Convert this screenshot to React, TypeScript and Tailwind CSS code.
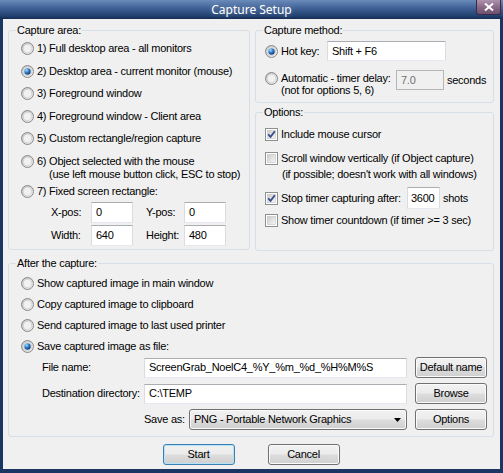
import React from 'react'

// 공통 폰트
const FONT = "font-['Liberation_Sans',Arial,sans-serif]"

const Radio = ({ on = false }: { on?: boolean }) => (
  <svg width="13" height="13" viewBox="0 0 13 13" className="shrink-0">
    <defs>
      <linearGradient id="rOut" x1="0" y1="0" x2="1" y2="1">
        <stop offset="0" stopColor="#bdbdbd" />
        <stop offset="1" stopColor="#f4f4f4" />
      </linearGradient>
      <radialGradient id="rDot" cx="0.35" cy="0.3" r="0.75">
        <stop offset="0" stopColor="#a9defc" />
        <stop offset="0.45" stopColor="#3485cf" />
        <stop offset="1" stopColor="#0b376e" />
      </radialGradient>
    </defs>
    <circle cx="6.5" cy="6.5" r="6" fill="url(#rOut)" stroke="#8a8a8a" />
    <circle cx="6.5" cy="6.5" r="4.2" fill="#f1f1f1" stroke="#d2d2d2" strokeWidth="0.8" />
    {on && <circle cx="6.5" cy="6.5" r="3.2" fill="url(#rDot)" />}
  </svg>
)

const Check = ({ on = false }: { on?: boolean }) => (
  <svg width="13" height="13" viewBox="0 0 13 13" className="shrink-0">
    <defs>
      <linearGradient id="cIn" x1="0" y1="0" x2="1" y2="1">
        <stop offset="0" stopColor="#cbcbcb" />
        <stop offset="1" stopColor="#f7f7f7" />
      </linearGradient>
    </defs>
    <rect x="0.5" y="0.5" width="12" height="12" fill="#ffffff" stroke="#8e8f8f" />
    <rect x="2.5" y="2.5" width="8" height="8" fill="url(#cIn)" stroke="#c4c4c4" strokeWidth="0.6" />
    {on && <path d="M3.3 6.4 L5.5 8.9 L9.9 3.3" fill="none" stroke="#34498c" strokeWidth="1.7" />}
  </svg>
)

// 텍스트 입력칸 모양
const Box = ({ children, className = '', dis = false }: { children?: React.ReactNode; className?: string; dis?: boolean }) => (
  <div
    className={`flex items-center pl-[4px] border ${
      dis
        ? 'bg-[#f0f0f0] border-[#b3b7ba] text-[#707070]'
        : 'bg-white border-[#abadb3] border-x-[#d9dce3] border-b-[#e3e9ef]'
    } ${className}`}
  >
    {children}
  </div>
)

const Btn = ({ children, def = false, className = '' }: { children: React.ReactNode; def?: boolean; className?: string }) => (
  <div
    className={`flex items-center justify-center w-[72px] h-[21px] rounded-[3px] border bg-[linear-gradient(#f2f2f2_0%,#ebebeb_48%,#dddddd_52%,#cfcfcf_100%)] ${
      def ? 'border-[#3c7fb1] shadow-[inset_0_0_0_1px_#b6e2f8]' : 'border-[#707070] shadow-[inset_0_0_0_1px_#fbfbfb]'
    } ${className}`}
  >
    {children}
  </div>
)

const Group = ({ title, className = '', children }: { title: string; className?: string; children: React.ReactNode }) => (
  <fieldset className={`border border-[#d5dfe5] rounded-[3px] min-w-0 ${className}`}>
    <legend className="ml-[7px] px-[1px] leading-[13px]">{title}</legend>
    {children}
  </fieldset>
)

export default function App() {
  return (
    <div className={`w-[503px] h-[473px] bg-[#1b3663] flex flex-col ${FONT} text-[11px] leading-[13px] tracking-[-0.25px] text-black whitespace-nowrap`}>
      {/* 타이틀 바 */}
      <div className="h-[19px] shrink-0 flex bg-[linear-gradient(#6b8bbb,#3d5f94_45%,#21406f_85%,#132a52)]">
        <div className="w-[27px]" />
        <div className="flex-1 text-center text-white text-[12px] leading-[19px] tracking-normal font-['Noto_Sans',sans-serif] [text-shadow:0_0_5px_rgba(255,255,255,0.35)]">
          Capture Setup
        </div>
        <div className="w-[25px] h-[15px] mr-[2px] flex items-center justify-center rounded-b-[3px] border border-t-0 border-[#3b2a45] bg-[linear-gradient(#ae93ad,#8a6a88_50%,#6f4f70)]">
          <svg width="10" height="8" viewBox="0 0 10 8">
            <path d="M1 0.5 L9 7.5 M9 0.5 L1 7.5" stroke="#ffffff" strokeWidth="2" />
          </svg>
        </div>
      </div>

      {/* 본문 */}
      <div className="mx-[3px] h-[450px] bg-[#f0f0f0] pt-[5px] pl-[5px] pr-[6px] flex flex-col">
        <div className="flex gap-[5px] h-[227px]">
          <Group title="Capture area:" className="w-[242px] h-[226px]">
            <div className="pl-[12px]">
              <div className="flex items-center h-[23px] gap-[3px]"><Radio /><span>1) Full desktop area - all monitors</span></div>
              <div className="flex items-center h-[22px] gap-[3px]"><Radio on /><span>2) Desktop area - current monitor (mouse)</span></div>
              <div className="flex items-center h-[23px] gap-[3px]"><Radio /><span>3) Foreground window</span></div>
              <div className="flex items-center h-[22px] gap-[3px]"><Radio /><span>4) Foreground window - Client area</span></div>
              <div className="flex items-center h-[23px] gap-[3px]"><Radio /><span>5) Custom rectangle/region capture</span></div>
              <div className="pt-[5px]">
                <div className="flex items-center h-[13px] gap-[3px]"><Radio /><span>6) Object selected with the mouse</span></div>
                <div className="ml-[28px] h-[12px] leading-[12px]">(use left mouse button click, ESC to stop)</div>
              </div>
              <div className="flex items-center h-[22px] gap-[3px]"><Radio /><span>7) Fixed screen rectangle:</span></div>
              <div className="flex items-center h-[21px] ml-[30px]">
                <span className="w-[40px]">X-pos:</span>
                <Box className="w-[42px] h-[21px]">0</Box>
                <span className="w-[38px] ml-[13px]">Y-pos:</span>
                <Box className="w-[42px] h-[21px]">0</Box>
              </div>
              <div className="flex items-center h-[21px] ml-[30px] mt-[2px]">
                <span className="w-[40px]">Width:</span>
                <Box className="w-[42px] h-[21px]">640</Box>
                <span className="w-[38px] ml-[13px]">Height:</span>
                <Box className="w-[42px] h-[21px]">480</Box>
              </div>
            </div>
          </Group>

          <div className="flex flex-col w-[239px]">
            <Group title="Capture method:" className="h-[79px]">
              <div className="pl-[9px] pt-[4px]">
                <div className="flex items-center h-[20px]">
                  <Radio on />
                  <span className="ml-[3px] w-[46px]">Hot key:</span>
                  <Box className="w-[119px] h-[20px]">Shift + F6</Box>
                </div>
                <div className="flex items-start mt-[9px]">
                  <div className="mt-[2px]"><Radio /></div>
                  <div className="ml-[3px] w-[115px] mt-[2px] leading-[12px]">
                    Automatic - timer delay:<br />(not for options 5, 6)
                  </div>
                  <Box dis className="w-[48px] h-[20px]">7.0</Box>
                  <span className="ml-[3px] leading-[20px]">seconds</span>
                </div>
              </div>
            </Group>

            <Group title="Options:" className="mt-[3px] h-[145px]">
              <div className="pl-[9px] pt-[4px]">
                <div className="flex items-center h-[23px] gap-[3px]"><Check on /><span>Include mouse cursor</span></div>
                <div className="flex items-center h-[13px] mt-[6px] gap-[3px]"><Check /><span>Scroll window vertically (if Object capture)</span></div>
                <div className="h-[13px] mt-[3px] ml-[17px]">(if possible; doesn't work with all windows)</div>
                <div className="flex items-center h-[22px] mt-[6px]">
                  <Check on />
                  <span className="ml-[3px] w-[126px]">Stop timer capturing after:</span>
                  <Box className="w-[33px] h-[22px] !pl-[3px]">3600</Box>
                  <span className="ml-[3px]">shots</span>
                </div>
                <div className="flex items-center h-[13px] mt-[5px] gap-[3px]"><Check /><span>Show timer countdown (if timer &gt;= 3 sec)</span></div>
              </div>
            </Group>
          </div>
        </div>

        {/* 캡처 후 처리 */}
        <Group title="After the capture:" className="mt-[6px] h-[180px]">
          <div className="pl-[12px] pt-[3px]">
            <div className="flex items-center h-[21px] gap-[3px]"><Radio /><span>Show captured image in main window</span></div>
            <div className="flex items-center h-[21px] gap-[3px]"><Radio /><span>Copy captured image to clipboard</span></div>
            <div className="flex items-center h-[21px] gap-[3px]"><Radio /><span>Send captured image to last used printer</span></div>
            <div className="flex items-center h-[21px] gap-[3px]"><Radio on /><span>Save captured image as file:</span></div>
          </div>
          <div className="pl-[33px] flex flex-col gap-[5px]">
            <div className="flex items-center h-[21px]">
              <span className="w-[102px]">File name:</span>
              <Box className="w-[263px] h-[20px]">ScreenGrab_NoelC4_%Y_%m_%d_%H%M%S</Box>
              <Btn className="ml-[8px]">Default name</Btn>
            </div>
            <div className="flex items-center h-[21px]">
              <span className="w-[102px]">Destination directory:</span>
              <Box className="w-[263px] h-[20px]">C:\TEMP</Box>
              <Btn className="ml-[8px]">Browse</Btn>
            </div>
            <div className="flex items-center h-[21px]">
              <span className="w-[102px]" />
              <div className="w-[263px] flex items-center">
                <span className="w-[45px]">Save as:</span>
                <div className="flex-1 h-[21px] flex items-center pl-[4px] pr-[5px] rounded-[3px] border border-[#707070] shadow-[inset_0_0_0_1px_#fbfbfb] bg-[linear-gradient(#f2f2f2_0%,#ebebeb_48%,#dddddd_52%,#cfcfcf_100%)]">
                  <span className="flex-1">PNG - Portable Network Graphics</span>
                  <svg width="7" height="4" viewBox="0 0 7 4"><path d="M0 0 H7 L3.5 4 Z" fill="#000" /></svg>
                </div>
              </div>
              <Btn className="ml-[8px]">Options</Btn>
            </div>
          </div>
        </Group>

        <div className="flex justify-center gap-[33px] mt-[7px]">
          <Btn def>Start</Btn>
          <Btn>Cancel</Btn>
        </div>
      </div>
    </div>
  )
}
